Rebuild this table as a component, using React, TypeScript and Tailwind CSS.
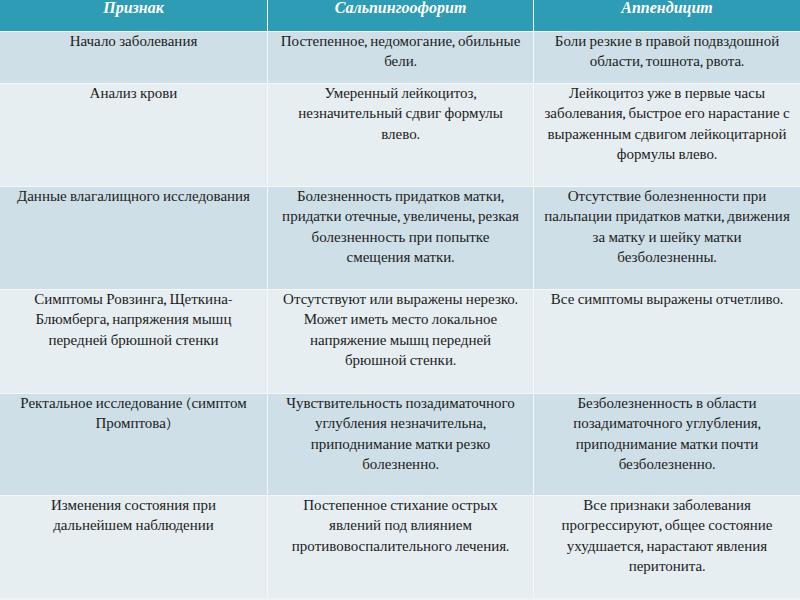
const header = ['Признак', 'Сальпингоофорит', 'Аппендицит'];

const rows: { tall: string; cells: string[] }[] = [
  {
    tall: 'h-[51px]',
    cells: [
      'Начало заболевания',
      'Постепенное, недомогание, обильные бели.',
      'Боли резкие в правой подвздошной области, тошнота, рвота.',
    ],
  },
  {
    tall: 'h-[102px]',
    cells: [
      'Анализ крови',
      'Умеренный лейкоцитоз, незначительный сдвиг формулы влево.',
      'Лейкоцитоз уже в первые часы заболевания, быстрое его нарастание с выраженным сдвигом лейкоцитарной формулы влево.',
    ],
  },
  {
    tall: 'h-[102px]',
    cells: [
      'Данные влагалищного исследования',
      'Болезненность придатков матки, придатки отечные, увеличены, резкая болезненность при попытке смещения матки.',
      'Отсутствие болезненности при пальпации придатков матки, движения за матку и шейку матки безболезненны.',
    ],
  },
  {
    tall: 'h-[103px]',
    cells: [
      'Симптомы Ровзинга, Щеткина-Блюмберга, напряжения мышц передней брюшной стенки',
      'Отсутствуют или выражены нерезко. Может иметь место локальное напряжение мышц передней брюшной стенки.',
      'Все симптомы выражены отчетливо.',
    ],
  },
  {
    tall: 'h-[101px]',
    cells: [
      'Ректальное исследование (симптом Промптова)',
      'Чувствительность позадиматочного углубления незначительна, приподнимание матки резко болезненно.',
      'Безболезненность в области позадиматочного углубления, приподнимание матки почти безболезненно.',
    ],
  },
  {
    tall: 'h-[102px]',
    cells: [
      'Изменения состояния при дальнейшем наблюдении',
      'Постепенное стихание острых явлений под влиянием противовоспалительного лечения.',
      'Все признаки заболевания прогрессируют, общее состояние ухудшается, нарастают явления перитонита.',
    ],
  },
];

function Cell({ text, dark, tall }: { text: string; dark: boolean; tall: string }) {
  return (
    <div className={`${tall} ${dark ? 'bg-[#cedfe7]' : 'bg-[#e6eef1]'} px-[10px]`}>
      <p className="font-serif font-['Liberation_Serif'] text-center text-[15px] leading-[20.3px] text-[#1c1c1c] -mt-[1px]">
        {text}
      </p>
    </div>
  );
}

export default function App() {
  return (
    <div className="w-[800px] h-[600px] overflow-hidden bg-[#eef3f5] font-['Liberation_Serif']">
      <div className="grid grid-cols-[267px_265px_266px] gap-[1px] bg-[#f3f7f8]">
        {header.map((t) => (
          <div key={t} className="h-[31px] bg-[#2d9cb4] flex justify-center">
            <span className="font-serif font-['Liberation_Serif'] text-white italic font-bold text-[16px] leading-[17px]">
              {t}
            </span>
          </div>
        ))}
        {rows.map((r, i) =>
          r.cells.map((c, j) => <Cell key={i + '-' + j} text={c} dark={i % 2 === 0} tall={r.tall} />),
        )}
      </div>
    </div>
  );
}
